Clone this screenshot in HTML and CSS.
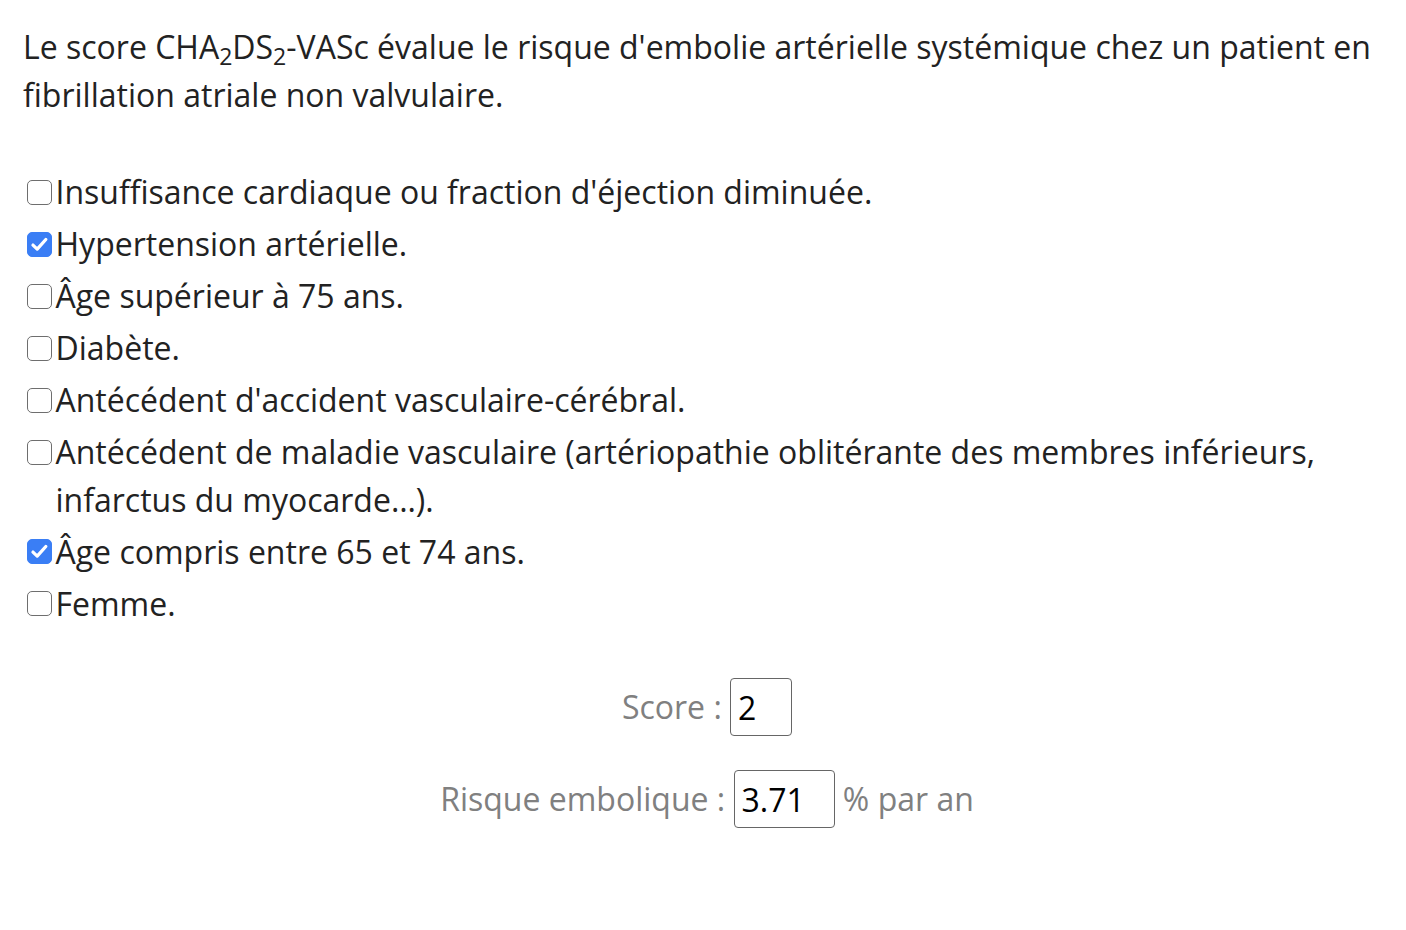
FILE: index.html
```html
<!DOCTYPE html>
<html lang="fr">
<head>
<meta charset="utf-8">
<title>Score CHA2DS2-VASc</title>
<link rel="stylesheet" href="styles.css">
</head>
<body>
<div class="page">
  <p class="intro">Le score CHA<sub>2</sub>DS<sub>2</sub>-VASc évalue le risque d'embolie artérielle systémique chez un patient en fibrillation atriale non valvulaire.</p>
  <div class="criteria">
    <label class="crit"><input type="checkbox"><span>Insuffisance cardiaque ou fraction d'éjection diminuée.</span></label>
    <label class="crit"><input type="checkbox" checked><span>Hypertension artérielle.</span></label>
    <label class="crit"><input type="checkbox"><span>Âge supérieur à 75 ans.</span></label>
    <label class="crit"><input type="checkbox"><span>Diabète.</span></label>
    <label class="crit"><input type="checkbox"><span>Antécédent d'accident vasculaire-cérébral.</span></label>
    <label class="crit"><input type="checkbox"><span>Antécédent de maladie vasculaire (artériopathie oblitérante des membres inférieurs, infarctus du myocarde…).</span></label>
    <label class="crit"><input type="checkbox" checked><span>Âge compris entre 65 et 74 ans.</span></label>
    <label class="crit"><input type="checkbox"><span>Femme.</span></label>
  </div>
  <div class="results">
    <div class="res-row">Score : <input class="out out-score" type="text" value="2" readonly></div>
    <div class="res-row">Risque embolique : <input class="out out-risk" type="text" value="3.71" readonly> % par an</div>
  </div>
</div>
</body>
</html>
```
FILE: styles.css
```css
html, body {
  margin: 0;
  padding: 0;
  background: #ffffff;
}
body {
  font-family: "Open Sans", "Liberation Sans", sans-serif;
  font-size: 32px;
  line-height: 47.5px;
  color: #222222;
}
.page {
  padding: 23px 23px;
}
.intro {
  margin: 0 0 50px 0;
}
.intro sub {
  font-size: 0.72em;
  line-height: 0;
  vertical-align: -0.25em;
}
.criteria {
  display: flex;
  flex-direction: column;
  gap: 4.5px;
}
.crit {
  display: flex;
  align-items: flex-start;
}
.crit input {
  -webkit-appearance: none;
  appearance: none;
  flex: 0 0 auto;
  width: 25px;
  height: 25px;
  margin: 11.5px 4px 0 3.5px;
  box-sizing: border-box;
  border: 1.75px solid #6e6e6e;
  border-radius: 5px;
  background: #ffffff;
}
.crit input:checked {
  border-color: #3a7ef5;
  background-color: #3a7ef5;
  background-image: url("data:image/svg+xml;utf8,<svg xmlns='http://www.w3.org/2000/svg' viewBox='0 0 24 24'><path d='M5.2 12.6 L9.6 16.8 L18.6 6.8' fill='none' stroke='white' stroke-width='3.4' stroke-linecap='round' stroke-linejoin='round'/></svg>");
  background-size: 100% 100%;
}
.results {
  margin-top: 51px;
  padding-left: 8px;
  display: flex;
  flex-direction: column;
  align-items: center;
  gap: 34px;
  color: #808080;
}
.res-row {
  display: flex;
  align-items: center;
  white-space: pre;
}
.out {
  font-family: "Open Sans", "Liberation Sans", sans-serif;
  font-size: 32px;
  color: #000000;
  height: 58px;
  box-sizing: border-box;
  border: 1.5px solid #666666;
  border-radius: 4px;
  padding: 0 0 0 7px;
  margin: 0;
  background: #ffffff;
  outline: none;
}
.out-score {
  width: 62px;
}
.out-risk {
  width: 101px;
}
```
